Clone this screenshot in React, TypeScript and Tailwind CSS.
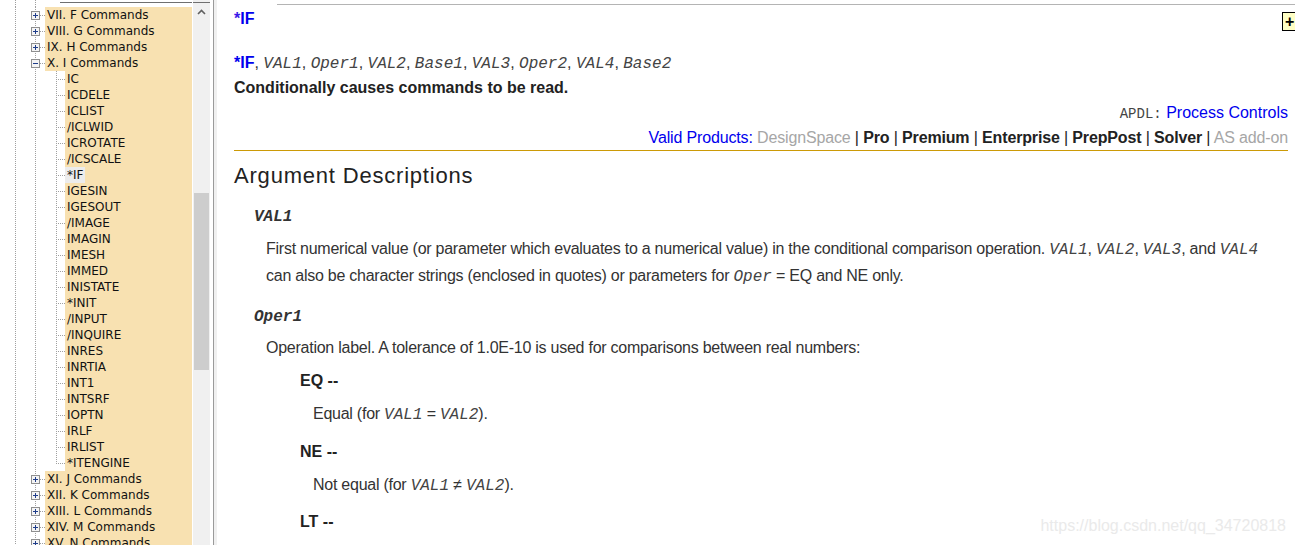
import React from "react";

type Item = { t: string; lvl: 0 | 1; box?: "+" | "-"; last?: boolean; sel?: boolean };

const items: Item[] = [
  { t: "VII. F Commands", lvl: 0, box: "+" },
  { t: "VIII. G Commands", lvl: 0, box: "+" },
  { t: "IX. H Commands", lvl: 0, box: "+" },
  { t: "X. I Commands", lvl: 0, box: "-" },
  { t: "IC", lvl: 1 },
  { t: "ICDELE", lvl: 1 },
  { t: "ICLIST", lvl: 1 },
  { t: "/ICLWID", lvl: 1 },
  { t: "ICROTATE", lvl: 1 },
  { t: "/ICSCALE", lvl: 1 },
  { t: "*IF", lvl: 1, sel: true },
  { t: "IGESIN", lvl: 1 },
  { t: "IGESOUT", lvl: 1 },
  { t: "/IMAGE", lvl: 1 },
  { t: "IMAGIN", lvl: 1 },
  { t: "IMESH", lvl: 1 },
  { t: "IMMED", lvl: 1 },
  { t: "INISTATE", lvl: 1 },
  { t: "*INIT", lvl: 1 },
  { t: "/INPUT", lvl: 1 },
  { t: "/INQUIRE", lvl: 1 },
  { t: "INRES", lvl: 1 },
  { t: "INRTIA", lvl: 1 },
  { t: "INT1", lvl: 1 },
  { t: "INTSRF", lvl: 1 },
  { t: "IOPTN", lvl: 1 },
  { t: "IRLF", lvl: 1 },
  { t: "IRLIST", lvl: 1 },
  { t: "*ITENGINE", lvl: 1, last: true },
  { t: "XI. J Commands", lvl: 0, box: "+" },
  { t: "XII. K Commands", lvl: 0, box: "+" },
  { t: "XIII. L Commands", lvl: 0, box: "+" },
  { t: "XIV. M Commands", lvl: 0, box: "+" },
  { t: "XV. N Commands", lvl: 0, box: "+" },
];

const dot = "#a0a0a0";

function Gutter({ it }: { it: Item }) {
  const w = it.lvl === 0 ? 45 : 65;
  return (
    <svg width={w} height={16} className="shrink-0 block" shapeRendering="crispEdges">
      <line x1="15.5" y1="0" x2="15.5" y2="16" stroke={dot} strokeDasharray="1 1" />
      <line x1="35.5" y1="0" x2="35.5" y2="16" stroke={dot} strokeDasharray="1 1" />
      {it.lvl === 0 && (
        <>
          <line x1="40" y1="8.5" x2="45" y2="8.5" stroke={dot} strokeDasharray="1 1" />
          <rect x="31.5" y="4.5" width="8" height="8" fill="#f4f4f4" stroke="#8f8f8f" />
          <line x1="33" y1="8.5" x2="38" y2="8.5" stroke="#1f3d8a" />
          {it.box === "+" && <line x1="35.5" y1="6" x2="35.5" y2="11" stroke="#1f3d8a" />}
        </>
      )}
      {it.lvl === 1 && (
        <>
          <line x1="56.5" y1="0" x2="56.5" y2={it.last ? 9 : 16} stroke={dot} strokeDasharray="1 1" />
          <line x1="58" y1="8.5" x2="65" y2="8.5" stroke={dot} strokeDasharray="1 1" />
        </>
      )}
    </svg>
  );
}

function Row({ it }: { it: Item }) {
  return (
    <div className="flex h-[16px] shrink-0">
      <Gutter it={it} />
      <div className="flex-1 bg-[#f8e1b1] flex items-center">
        <span
          className={`pl-[2px] pr-[2px] leading-[16px] h-[16px] text-[12px] text-[#111] whitespace-nowrap ${
            it.sel ? "bg-[#ececec]" : ""
          }`}
        >
          {it.t}
        </span>
      </div>
    </div>
  );
}

const M = ({ children, b }: { children: React.ReactNode; b?: boolean }) => (
  <span
    className={`italic tracking-normal ${b ? "font-bold" : "text-[#444]"}`}
    style={{ fontFamily: '"Liberation Mono", "Courier New", monospace' }}
  >
    {children}
  </span>
);

export default function App() {
  return (
    <div
      className="w-[1295px] h-[545px] overflow-hidden flex bg-white relative"
      style={{ fontFamily: '"Liberation Sans", Arial, sans-serif' }}
    >
      {/* Left tree panel */}
      <div className="w-[192px] shrink-0 flex flex-col" style={{ fontFamily: '"DejaVu Sans", Tahoma, sans-serif' }}>
        <div className="h-[7px] shrink-0 flex">
          <svg width={45} height={7} className="shrink-0 block" shapeRendering="crispEdges">
            <line x1="15.5" y1="0" x2="15.5" y2="7" stroke={dot} strokeDasharray="1 1" />
            <line x1="35.5" y1="0" x2="35.5" y2="7" stroke={dot} strokeDasharray="1 1" />
          </svg>
          <div className="flex-1 flex flex-col">
            <div className="h-[3px] border-b border-[#6f6f6f] ml-[15px]" />
          </div>
        </div>
        {items.map((it, i) => (
          <Row key={i} it={it} />
        ))}
      </div>

      {/* Scrollbar */}
      <div className="w-[17px] shrink-0 bg-[#f0f0f0] flex flex-col items-center ml-[1px]">
        <div className="h-[3px] w-full border-b border-[#6f6f6f]" />
        <div className="h-[18px] flex items-center justify-center">
          <svg width="9" height="6" viewBox="0 0 9 6">
            <path d="M1 5 L4.5 1.5 L8 5" fill="none" stroke="#606060" strokeWidth="1.6" />
          </svg>
        </div>
        <div className="h-[172px]" />
        <div className="w-[15px] h-[177px] bg-[#cdcdcd]" />
      </div>

      {/* Splitter */}
      <div className="w-[3px] shrink-0 bg-white" />
      <div className="w-[1px] shrink-0 bg-[#9a9a9a]" />
      <div className="w-[3px] shrink-0 bg-[#f0f0f0]" />

      {/* Content */}
      <div className="flex-1 flex flex-col relative min-w-0">
        <div className="h-[5px] shrink-0 flex">
          <div className="w-[60px] shrink-0" />
          <div className="flex-1 border-b border-[#b4b4b4]" />
        </div>
        <div className="pl-[17px] pr-[7px] flex flex-col text-[#222]">
          <div className="h-[28px] leading-[28px] text-[16px] font-bold text-[#0000ee]">
            <span className="text-[#3a1ae8]">*</span>IF
          </div>
          <div className="mt-[17px] h-[25px] leading-[25px] text-[16px] text-[#333] whitespace-nowrap">
            <span className="font-bold text-[#0000ee]">*IF</span>, <M>VAL1</M>, <M>Oper1</M>, <M>VAL2</M>,{" "}
            <M>Base1</M>, <M>VAL3</M>, <M>Oper2</M>, <M>VAL4</M>, <M>Base2</M>
          </div>
          <div className="h-[25px] leading-[25px] text-[16px] font-bold text-[#222]">
            Conditionally causes commands to be read.
          </div>
          <div className="h-[25px] leading-[25px] text-right whitespace-nowrap">
            <span
              className="text-[14px] text-[#444]"
              style={{ fontFamily: '"Liberation Mono", "Courier New", monospace' }}
            >
              APDL:
            </span>{" "}
            <span className="text-[16px] text-[#0000ee]">Process Controls</span>
          </div>
          <div className="h-[26px] leading-[25px] text-right whitespace-nowrap text-[16px] tracking-[-0.15px] text-[#222] border-b border-[#cc9a06]">
            <span className="text-[#0000ee]">Valid Products:</span> <span className="text-[#a6a6a6]">DesignSpace</span> |{" "}
            <b>Pro</b> | <b>Premium</b> | <b>Enterprise</b> | <b>PrepPost</b> | <b>Solver</b> |{" "}
            <span className="text-[#a6a6a6]">AS add-on</span>
          </div>

          <div className="mt-[10px] h-[30px] leading-[30px] text-[22px] tracking-[0.8px] text-[#222]">
            Argument Descriptions
          </div>

          <div className="mt-[15px] ml-[20px] h-[20px] leading-[20px] text-[16px] text-[#333]">
            <M b>VAL1</M>
          </div>
          <div className="mt-[10px] ml-[32px] leading-[26px] text-[16px] tracking-[-0.25px] text-[#333] whitespace-nowrap">
            First numerical value (or parameter which evaluates to a numerical value) in the conditional comparison
            operation. <M>VAL1</M>, <M>VAL2</M>, <M>VAL3</M>, and <M>VAL4</M>
            <br />
            can also be character strings (enclosed in quotes) or parameters for <M>Oper</M> = EQ and NE only.
          </div>

          <div className="mt-[16px] ml-[20px] h-[20px] leading-[20px] text-[16px] text-[#333]">
            <M b>Oper1</M>
          </div>
          <div className="mt-[9px] ml-[32px] leading-[26px] text-[16px] tracking-[-0.25px] text-[#333] whitespace-nowrap">
            Operation label. A tolerance of 1.0E-10 is used for comparisons between real numbers:
          </div>

          <div className="mt-[8px] ml-[66px] h-[24px] leading-[24px] text-[16px] font-bold text-[#222]">EQ --</div>
          <div className="mt-[8px] ml-[79px] h-[26px] leading-[26px] text-[16px] tracking-[-0.25px] text-[#333]">
            Equal (for <M>VAL1</M> = <M>VAL2</M>).
          </div>
          <div className="mt-[13px] ml-[66px] h-[24px] leading-[24px] text-[16px] font-bold text-[#222]">NE --</div>
          <div className="mt-[8px] ml-[79px] h-[26px] leading-[26px] text-[16px] tracking-[-0.25px] text-[#333]">
            Not equal (for <M>VAL1</M> ≠ <M>VAL2</M>).
          </div>
          <div className="mt-[12px] ml-[66px] h-[24px] leading-[24px] text-[16px] font-bold text-[#222]">LT --</div>
        </div>

        {/* corner + box */}
        <div className="absolute top-[12px] right-[-8px] w-[21px] h-[19px] bg-[#ffffc4] border border-black flex items-center pl-[2px]">
          <span className="text-[16px] font-bold leading-none text-black">+</span>
        </div>
      </div>

      {/* watermark */}
      <div className="absolute right-[9px] bottom-[11px] text-[16px] text-[#eaeaea] leading-none">
        https://blog.csdn.net/qq_34720818
      </div>
    </div>
  );
}
